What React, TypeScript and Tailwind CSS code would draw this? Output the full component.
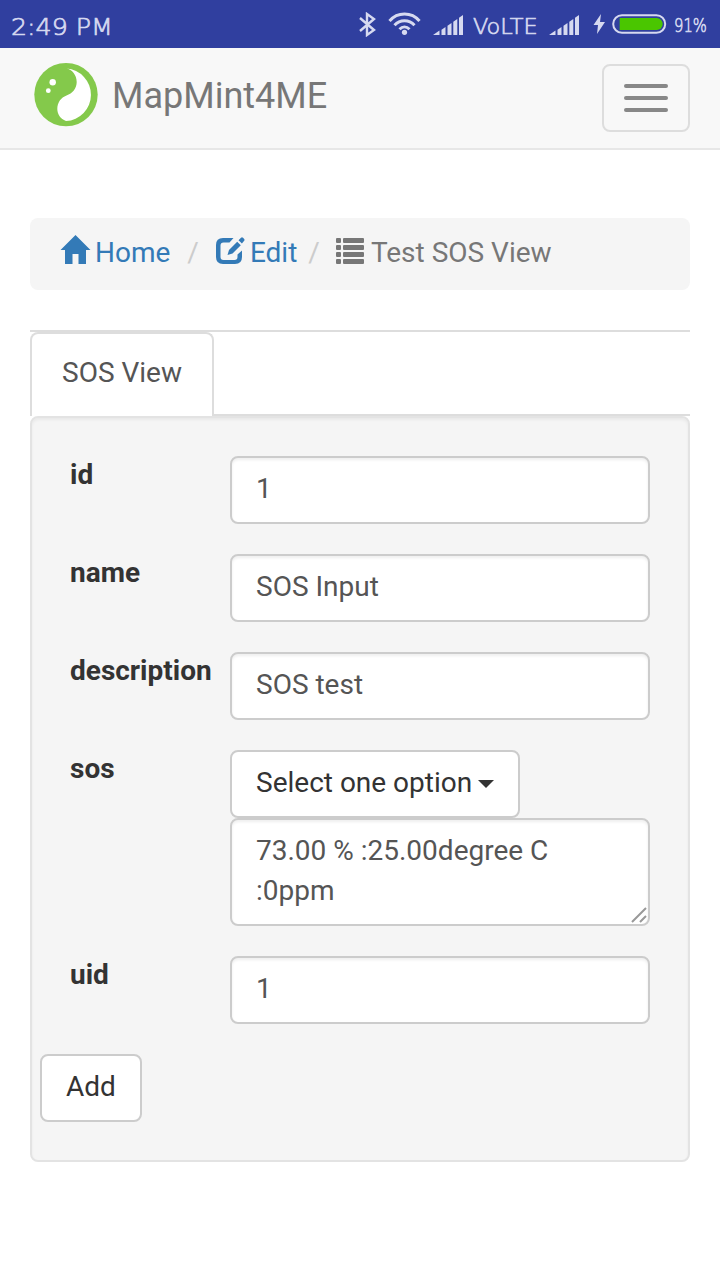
import type { ReactNode } from "react";

const statusText = "font-['DejaVu_Sans'] font-extralight text-[#d6d9f0] whitespace-nowrap [-webkit-text-stroke:0.7px_#d6d9f0]";

function Signal() {
  return (
    <svg width="32" height="22" viewBox="0 0 32 22" fill="#d6d9f0">
      <path d="M0 21l6.500-4.500V21zM8.500 15.800l4-2.700V21h-4zM14.500 11.700l4-2.700v12h-4zM20.300 7.700l4-2.700v16h-4zM26 3.800L30 1v20h-4z" />
    </svg>
  );
}

function StatusBar() {
  return (
    <header className="flex h-12 bg-[#303f9f]">
      <span className={`${statusText} ml-[11px] mt-[9px] w-[348px] text-[23px] leading-[36px]`}>
        <span className="inline-block origin-left scale-x-[1.100]">2:49 PM</span>
      </span>
      <svg className="mt-3 shrink-0" width="17" height="25" viewBox="0 0 17 25" fill="none" stroke="#d6d9f0" strokeWidth="2.400">
        <path d="M1 6l14 12-7 5V2l7 5L1 19" />
      </svg>
      <svg className="ml-3 mt-3 shrink-0" width="33" height="24" viewBox="0 0 33 24" fill="none" stroke="#d6d9f0" strokeWidth="3">
        <path d="M1.500 9c8-9.300 22-9.300 30 0M6.500 13.200c5.500-6 14.500-6 20 0M11.500 17.200c3-3 7-3 10 0" />
        <circle cx="16.500" cy="20.300" r="2.600" fill="#d6d9f0" stroke="none" />
      </svg>
      <div className="ml-[12px] mt-[14px] w-8 shrink-0"><Signal /></div>
      <span className={`${statusText} ml-[8px] mt-[9px] w-[66px] text-[22px] leading-[36px]`}>
        <span className="inline-block origin-left scale-x-[1.020]">VoLTE</span>
      </span>
      <div className="ml-[10px] mt-[14px] w-8 shrink-0"><Signal /></div>
      <svg className="ml-[12px] mt-[14px] shrink-0" width="14" height="21" viewBox="0 0 14 21" fill="#d6d9f0">
        <path d="M8 0L.500 11H5L4 20l8-12H7z" />
      </svg>
      <svg className="ml-[5px] mt-[14px] shrink-0" width="55" height="20" viewBox="0 0 55 20">
        <rect x="1.200" y="1.200" width="52" height="17.600" rx="8.800" fill="none" stroke="#d6d9f0" strokeWidth="2" />
        <path d="M7.700 4h37a6 6 0 010 12h-37z" fill="#4ac600" />
      </svg>
      <span className={`${statusText} ml-[7px] mt-[7px] text-[20px] leading-[36px]`}>
        <span className="inline-block origin-left scale-x-[.740]">91%</span>
      </span>
    </header>
  );
}

function Navbar() {
  return (
    <nav className="flex h-[102px] border-b-2 border-[#e7e7e7] bg-[#f8f8f8]">
      <svg className="ml-[34px] mt-[14px]" width="64" height="66" viewBox="34 62 64 66">
        <circle cx="66" cy="94.600" r="31.700" fill="#84c94b" />
        <path
          d="M66.500 68.500C72 69.500 76.700 75 76.700 82c0 6.500-4.200 11.500-10.200 13.500C61 97.500 57.300 102.500 57.300 109c0 5 3.200 10 8.700 12A26.300 26.300 0 0066.500 68.500"
          fill="#fff"
        />
        <circle cx="52.700" cy="82.300" r="3.200" fill="#fff" />
        <circle cx="48.300" cy="90.700" r="2.400" fill="#fff" />
      </svg>
      <span className="ml-[14px] mt-[28px] text-[36px] leading-[40px] text-[#777]">MapMint4ME</span>
      <button className="ml-auto mr-[30px] mt-4 flex h-[68px] w-[88px] flex-col items-center gap-2 rounded-lg border-2 border-[#ddd] pt-[18px]">
        <i className="h-1 w-11 rounded-sm bg-[#888]" />
        <i className="h-1 w-11 rounded-sm bg-[#888]" />
        <i className="h-1 w-11 rounded-sm bg-[#888]" />
      </button>
    </nav>
  );
}

function Breadcrumb() {
  return (
    <div className="mt-[68px] flex h-[72px] rounded-lg bg-[#f5f5f5] pl-[30px] pt-[15px] leading-[40px] text-[#337ab7]">
      <svg className="mt-[2px]" width="31" height="30" viewBox="0 0 31 30" fill="currentColor">
        <path d="M15.500 0L30.500 15H26v14h-7.500V19h-6v10H5V15H.500z" />
      </svg>
      <span className="ml-1">Home</span>
      <span className="ml-[17px] text-[#ccc]">/</span>
      <svg className="ml-[16px] mt-[3px]" width="30" height="30" viewBox="0 0 30 30" fill="currentColor">
        <path d="M18.500 2H8Q1 2 1 9v12q0 7 7 7h12q7 0 7-7v-6.500l-4.500 4V21q0 3-3 3h-11q-3 0-3-3V9.500q0-3 3-3h6z" />
        <path d="M12.500 19l1.500-5L22.200 5.800l3.600 3.400-8.300 8.300zM23.500 4.300L26 1.800q1-1 2 0l1.200 1.200q.800 1 0 1.800L26.900 7.500z" />
      </svg>
      <span className="ml-[5px]">Edit</span>
      <span className="ml-[11px] text-[#ccc]">/</span>
      <svg className="ml-[15px] mt-[5px]" width="30" height="26" viewBox="0 0 30 26" fill="#777">
        {[0, 7, 14, 21].map((y) => (
          <g key={y}>
            <rect x="1" y={y} width="5" height="5" rx="1" />
            <rect x="8" y={y} width="21" height="5" rx="1" />
          </g>
        ))}
      </svg>
      <span className="ml-[6px] text-[#777]">Test SOS View</span>
    </div>
  );
}

const box = "rounded-lg border-2 border-[#ccc] bg-white px-6 text-[#555]";
const inset = "shadow-[inset_0_2px_3px_rgba(0,0,0,0.065)]";

function Row({ label, children }: { label: string; children: ReactNode }) {
  return (
    <div className="mb-[30px] flex px-[38px]">
      <label className="w-40 shrink-0 font-bold leading-[38px] text-[#333]">{label}</label>
      <div className="flex-1">{children}</div>
    </div>
  );
}

function Field({ value }: { value: string }) {
  return <div className={`${box} ${inset} h-[68px] pt-[11px]`}>{value}</div>;
}

export default function App() {
  return (
    <div className="h-[1280px] w-[720px] overflow-hidden bg-white font-['Roboto',sans-serif] text-[28px] leading-[40px]">
      <StatusBar />
      <Navbar />
      <main className="px-[30px]">
        <Breadcrumb />
        <div className="mt-10 flex border-t-2 border-[#ddd]">
          <div className="h-[84px] w-[184px] rounded-t-lg border-2 border-b-0 border-[#ddd] pl-[30px] pt-[19px] text-[#555]">SOS View</div>
          <div className="h-[84px] flex-1 border-b-2 border-[#ddd]" />
        </div>
        <section className="h-[746px] rounded-lg border-2 border-[#e3e3e3] bg-[#f5f5f5] pt-[38px] shadow-[inset_0_2px_3px_rgba(0,0,0,0.05)]">
          <Row label="id"><Field value="1" /></Row>
          <Row label="name"><Field value="SOS Input" /></Row>
          <Row label="description"><Field value="SOS test" /></Row>
          <Row label="sos">
            <button className="flex h-[68px] w-[290px] rounded-lg border-2 border-[#ccc] bg-white pl-6 pt-[11px] text-[#333]">
              Select one option
              <svg className="ml-[6px] mt-[17px]" width="16" height="8" viewBox="0 0 16 8" fill="#333"><path d="M0 0h16L8 8z" /></svg>
            </button>
            <div className={`${box} ${inset} relative h-[108px] pt-[11px]`}>
              73.00 % :25.00degree C<br />:0ppm
              <svg className="absolute bottom-[1px] right-[1px]" width="16" height="16" viewBox="0 0 16 16" stroke="#999" strokeWidth="2">
                <path d="M1 15L15 1M9 15l6-6" />
              </svg>
            </div>
          </Row>
          <Row label="uid"><Field value="1" /></Row>
          <button className="ml-2 block h-[68px] w-[102px] rounded-lg border-2 border-[#ccc] bg-white pb-[2px] text-[#333]">Add</button>
        </section>
      </main>
    </div>
  );
}
